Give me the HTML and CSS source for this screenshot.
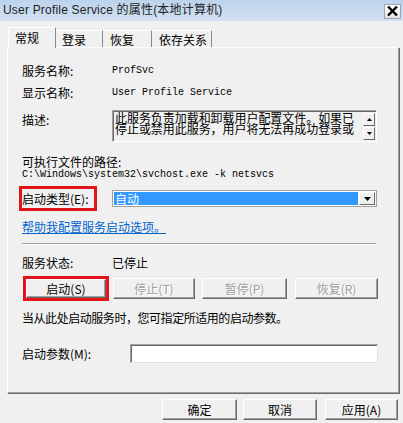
FILE: index.html
```html
<!DOCTYPE html>
<html lang="zh-CN">
<head>
<meta charset="utf-8">
<link rel="stylesheet" href="styles.css">
</head>
<body>
<div class="window">
  <div class="titlebar">
    <span class="title">User Profile Service 的属性(本地计算机)</span>
    <span class="close"><svg width="11" height="10" viewBox="0 0 11 10"><path d="M1 0.5 L10 9.5 M10 0.5 L1 9.5" stroke="#000" stroke-width="2.4"/></svg></span>
  </div>
  <div class="tabs">
    <div class="tab active t1">常规</div>
    <div class="tab t2">登录</div>
    <div class="tab t3">恢复</div>
    <div class="tab t4">依存关系</div>
  </div>
  <div class="panel">
    <div class="row r-name"><span class="label">服务名称:</span><span class="mono">ProfSvc</span></div>
    <div class="row r-disp"><span class="label">显示名称:</span><span class="mono">User Profile Service</span></div>
    <div class="row r-desc">
      <span class="label desc-label">描述:</span>
      <div class="descbox">
        <div class="desctext">此服务负责加载和卸载用户配置文件。如果已停止或禁用此服务，用户将无法再成功登录或</div>
        <div class="spin">
          <span class="sbtn"><svg width="5" height="3" viewBox="0 0 5 3"><path d="M2.5 0 L5 3 L0 3Z" fill="#000"/></svg></span>
          <span class="sbtn"><svg width="5" height="3" viewBox="0 0 5 3"><path d="M0 0 L5 0 L2.5 3Z" fill="#000"/></svg></span>
        </div>
      </div>
    </div>
    <div class="line r-exe">可执行文件的路径:</div>
    <div class="line mono r-path">C:\Windows\system32\svchost.exe -k netsvcs</div>
    <div class="row r-type">
      <span class="redbox type-label">启动类型(E):</span>
      <div class="combo">
        <span class="combo-val">自动</span>
        <span class="combo-btn"><svg width="7" height="4" viewBox="0 0 7 4"><path d="M0 0 L7 0 L3.5 4Z" fill="#000"/></svg></span>
      </div>
    </div>
    <div class="line link">帮助我配置服务启动选项。</div>
    <div class="sep"></div>
    <div class="row r-status"><span class="label">服务状态:</span><span>已停止</span></div>
    <div class="row r-btns">
      <span class="redbox btnwrap"><span class="btn b-start">启动(S)</span></span>
      <span class="btn disabled b-stop">停止(T)</span>
      <span class="btn disabled b-pause">暂停(P)</span>
      <span class="btn disabled b-resume">恢复(R)</span>
    </div>
    <div class="line r-hint">当从此处启动服务时，您可指定所适用的启动参数。</div>
    <div class="row r-param"><span class="param-label">启动参数(M):</span><span class="input"></span></div>
  </div>
  <div class="footer">
    <span class="btn f-ok">确定</span>
    <span class="btn f-cancel">取消</span>
    <span class="btn f-apply">应用(A)</span>
  </div>
</div>
</body>
</html>
```
FILE: styles.css
```css
* { box-sizing: border-box; }
html, body { margin: 0; padding: 0; background: #f0f0f0; }
body {
  font-family: "Noto Sans CJK SC", "Liberation Sans", sans-serif;
  font-size: 12px;
  color: #000;
}
.window {
  width: 403px;
  height: 423px;
  background: #f0f0f0;
  overflow: hidden;
  display: flex;
  flex-direction: column;
}
.titlebar {
  height: 21px;
  background: linear-gradient(#bcd3ec, #d3e2f2);
  display: flex;
  align-items: center;
  justify-content: space-between;
  padding: 0 2px 0 3px;
}
.title {
  font-family: "Liberation Sans", "Noto Sans CJK SC", sans-serif;
  font-size: 12px;
  color: #1e1e1e;
  line-height: 21px;
  letter-spacing: 0.2px;
}
.close {
  width: 17px;
  height: 15px;
  background: linear-gradient(#ffffff, #e4e4e4);
  border: 1px solid #9aa6b4;
  display: flex;
  align-items: center;
  justify-content: center;
  margin-top: 1px;
}
.tabs {
  height: 26px;
  display: flex;
  align-items: flex-end;
  padding-left: 8px;
}
.tab {
  height: 18px;
  border-top: 1px solid #fff;
  border-right: 1px solid #888;
  line-height: 17px;
  padding-left: 6px;
  position: relative;
  top: 1px;
}
.tab.active {
  height: 21px;
  border-left: 1px solid #fff;
  line-height: 20px;
  z-index: 2;
  background: #f0f0f0;
}
.t1 { width: 48px; padding-left: 6px; }
.t2 { width: 47px; }
.t3 { width: 49px; padding-left: 7px; }
.t4 { width: 60px; padding-left: 7px; }
.panel {
  margin-left: 7px;
  width: 392px;
  height: 346px;
  border-top: 1px solid #fff;
  border-left: 1px solid #fff;
  border-right: 1px solid #a0a0a0;
  border-bottom: 1px solid #a0a0a0;
  box-shadow: 1px 1px 0 #696969;
  padding: 14px 0 0 14px;
  display: flex;
  flex-direction: column;
  position: relative;
}
.row { display: flex; align-items: center; }
.line { line-height: 13px; height: 13px; }
.label { width: 90px; flex: none; }
.mono {
  font-family: "Liberation Mono", monospace;
  font-size: 10px;
}
.r-name { height: 16px; }
.r-disp { height: 16px; margin-top: 6px; }
.r-desc { margin-top: 10px; align-items: flex-start; }
.desc-label { padding-top: 1px; }
.descbox {
  width: 265px;
  height: 32px;
  border-top: 1px solid #a0a0a0;
  border-left: 1px solid #a0a0a0;
  border-right: 1px solid #fff;
  border-bottom: 1px solid #fff;
  box-shadow: inset 1px 1px 0 #696969;
  display: flex;
  justify-content: space-between;
  padding: 1px 1px 0 2px;
}
.desctext {
  width: 245px;
  line-height: 11px;
  letter-spacing: -0.05px;
}
.spin { display: flex; flex-direction: column; gap: 1px; padding-top: 1px; }
.sbtn {
  width: 12px;
  height: 13px;
  background: #f0f0f0;
  border-top: 1px solid #fff;
  border-left: 1px solid #fff;
  border-right: 1px solid #696969;
  border-bottom: 1px solid #696969;
  display: flex;
  align-items: center;
  justify-content: center;
}
.r-exe { margin-top: 13px; }
.r-path { margin-top: 0; }
.r-type { margin-top: 5px; height: 25px; }
.redbox { border: 3px solid #e4141b; }
.type-label {
  margin-left: -3px;
  width: 78px;
  height: 25px;
  line-height: 19px;
  flex: none;
}
.combo {
  margin-left: 15px;
  width: 265px;
  height: 17px;
  border: 1px solid #a0a0a0;
  background: #fff;
  display: flex;
  padding: 1px;
}
.combo-val {
  flex: 1;
  background: #3399ff;
  color: #fff;
  line-height: 13px;
  padding-left: 1px;
}
.combo-btn {
  width: 16px;
  height: 13px;
  border-top: 1px solid #fff;
  border-left: 1px solid #fff;
  border-right: 1px solid #696969;
  border-bottom: 1px solid #696969;
  background: #f0f0f0;
  display: flex;
  align-items: center;
  justify-content: center;
  margin-left: 1px;
}
.link {
  margin-top: 9px;
  height: 14px;
  line-height: 14px;
  color: #0066cc;
  text-decoration: underline;
}
.sep {
  margin-top: 9px;
  width: 354px;
  height: 2px;
  border-top: 1px solid #a0a0a0;
  border-bottom: 1px solid #fff;
}
.r-status { margin-top: 10px; height: 14px; }
.r-btns { margin-top: 7px; height: 25px; }
.btn {
  height: 21px;
  background: #f0f0f0;
  border-top: 1px solid #fff;
  border-left: 1px solid #fff;
  border-right: 1px solid #696969;
  border-bottom: 1px solid #696969;
  box-shadow: inset -1px -1px 0 #a0a0a0;
  display: flex;
  align-items: center;
  justify-content: center;
  line-height: 19px;
  flex: none;
}
.btnwrap {
  margin-left: 1px;
  width: 86px;
  height: 25px;
  display: flex;
  flex: none;
}
.b-start { width: 80px; height: 19px; }
.disabled { color: #a0a0a0; text-shadow: 1px 1px 0 #fff; }
.b-stop { width: 82px; margin-left: 4px; }
.b-pause { width: 85px; margin-left: 7px; }
.b-resume { width: 83px; margin-left: 8px; }
.r-hint { margin-top: 10px; height: 14px; line-height: 14px; letter-spacing: -0.45px; }
.r-param { margin-top: 19px; height: 19px; }
.param-label { width: 108px; flex: none; }
.input {
  width: 248px;
  height: 19px;
  background: #fff;
  border-top: 1px solid #a0a0a0;
  border-left: 1px solid #a0a0a0;
  border-right: 1px solid #e3e3e3;
  border-bottom: 1px solid #e3e3e3;
  box-shadow: inset 1px 1px 0 #696969;
}
.footer {
  display: flex;
  padding-left: 162px;
  margin-top: 6px;
}
.f-ok { width: 75px; }
.f-cancel { width: 74px; margin-left: 6px; }
.f-apply { width: 73px; margin-left: 8px; }
```
